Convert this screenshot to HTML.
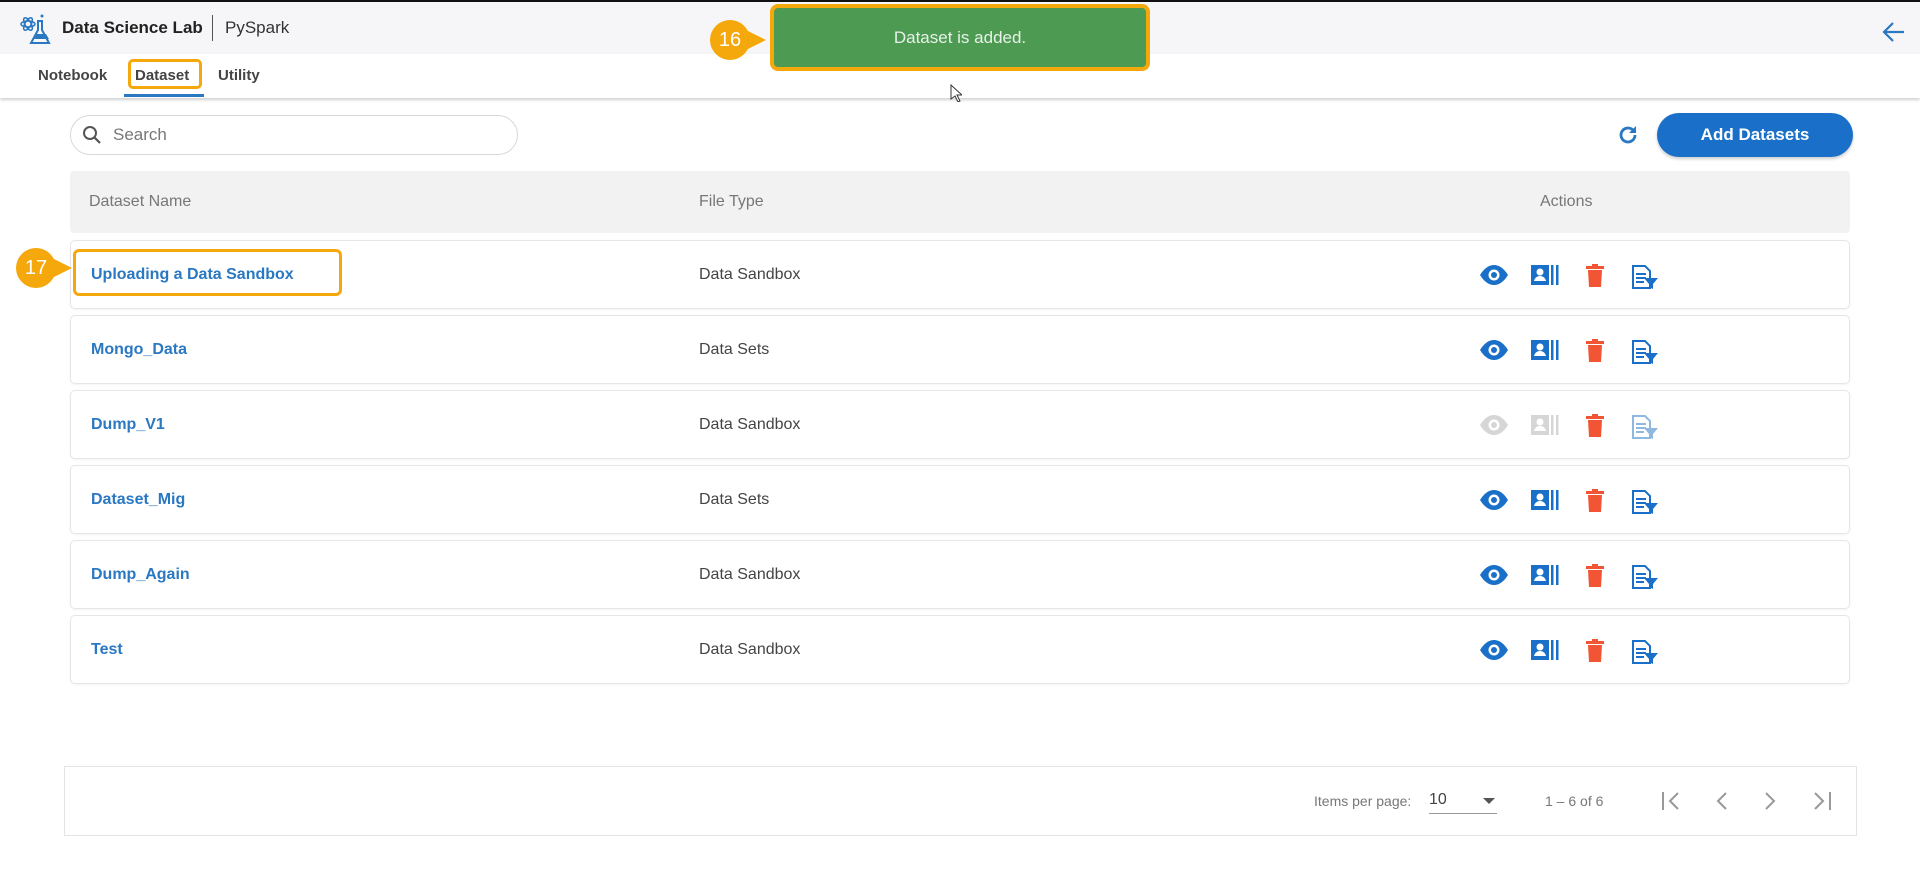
<!DOCTYPE html>
<html><head><meta charset="utf-8"><style>
*{box-sizing:border-box;margin:0;padding:0}
body{width:1920px;height:873px;background:#fff;font-family:"Liberation Sans",sans-serif;position:relative;overflow:hidden;color:#333}
.abs{position:absolute}
.top{left:0;top:0;width:1920px;height:54px;background:#f6f6f8;border-top:2px solid #111}
.tabs{left:0;top:54px;width:1920px;height:44px;background:#fff;box-shadow:0 2px 3px rgba(0,0,0,.18)}
.tab{position:absolute;top:67px;font-size:15px;color:#444;font-weight:bold}
.th{color:#777;font-size:16px}
.row{position:absolute;left:70px;width:1780px;height:69px;border:1px solid #e6e6e6;border-radius:5px;background:#fff;box-shadow:0 1px 2px rgba(0,0,0,.05)}
.row .n{position:absolute;left:20px;top:25px;font-size:16px;font-weight:bold;color:#2a78c2}
.row .t{position:absolute;left:628px;top:25px;font-size:16px;color:#444}
.row svg{position:absolute;top:23px}
.badge{background:#f5a80c;color:#fff;font-size:20px;width:40px;height:40px;border-radius:50%;text-align:center;line-height:40px}
</style></head><body>
<div class="abs top"></div>
<svg class="abs" style="left:20px;top:13px" width="32" height="34" viewBox="0 0 32 34"><ellipse cx="8" cy="11" rx="7" ry="3" fill="none" stroke="#2a78c2" stroke-width="1.5"/><ellipse cx="8" cy="11" rx="7" ry="3" transform="rotate(60 8 11)" fill="none" stroke="#2a78c2" stroke-width="1.5"/><ellipse cx="8" cy="11" rx="7" ry="3" transform="rotate(-60 8 11)" fill="none" stroke="#2a78c2" stroke-width="1.5"/><path d="M17 8h6M18 8v9l-7 13h18l-7-13V8" fill="none" stroke="#2a78c2" stroke-width="2"/><path d="M13 26l3-5h10l3 5z" fill="#2a78c2"/><circle cx="22" cy="3" r="1.5" fill="#2a78c2"/></svg>
<div class="abs" style="left:62px;top:18px;font-size:17px;font-weight:bold;color:#222">Data Science Lab</div>
<div class="abs" style="left:212px;top:15px;width:1px;height:26px;background:#555"></div>
<div class="abs" style="left:225px;top:18px;font-size:17px;color:#333">PySpark</div>
<svg class="abs" style="left:1882px;top:21px" width="24" height="22" viewBox="0 0 24 22"><path d="M22 11H3M11 2L2 11l9 9" fill="none" stroke="#2a78c2" stroke-width="2.2"/></svg>
<div class="abs tabs"></div>
<div class="tab" style="left:38px">Notebook</div>
<div class="tab" style="left:135px">Dataset</div>
<div class="tab" style="left:218px">Utility</div>
<div class="abs" style="left:128px;top:59px;width:74px;height:30px;border:3px solid #f5a80c;border-radius:5px"></div>
<div class="abs" style="left:124px;top:94px;width:80px;height:3px;background:#2a78c2"></div>
<div class="abs" style="left:770px;top:4px;width:380px;height:67px;background:#4d9a52;border:4px solid #f5a80c;border-radius:8px;color:#e8f2e8;font-size:17px;text-align:center;line-height:59px">Dataset is added.</div>
<div class="abs badge" style="left:710px;top:20px">16</div>
<div class="abs" style="left:746px;top:30px;width:0;height:0;border-top:10px solid transparent;border-bottom:10px solid transparent;border-left:20px solid #f5a80c"></div>
<svg class="abs" style="left:950px;top:84px" width="12" height="18" viewBox="0 0 12 18"><path d="M1 1v14l4-3 3 6 2-1-3-6h5z" fill="#fff" stroke="#333"/></svg>
<div class="abs" style="left:70px;top:115px;width:448px;height:40px;border:1px solid #d8d8d8;border-radius:20px"></div>
<svg class="abs" style="left:82px;top:125px" width="20" height="20" viewBox="0 0 20 20"><circle cx="8" cy="8" r="6" fill="none" stroke="#555" stroke-width="2"/><path d="M12.5 12.5L18 18" stroke="#555" stroke-width="2.2"/></svg>
<div class="abs" style="left:113px;top:125px;font-size:17px;color:#777">Search</div>
<svg class="abs" style="left:1616px;top:123px" width="24" height="24" viewBox="0 0 24 24"><path d="M19 12a7 7 0 1 1-2.1-5" fill="none" stroke="#2a78c2" stroke-width="2.8"/><path d="M20 3v7h-7z" fill="#2a78c2"/></svg>
<div class="abs" style="left:1657px;top:113px;width:196px;height:44px;background:#1a70c8;border-radius:22px;color:#fff;font-weight:bold;font-size:17px;text-align:center;line-height:44px;box-shadow:0 2px 3px rgba(0,0,0,.2)">Add Datasets</div>
<div class="abs" style="left:70px;top:171px;width:1780px;height:62px;background:#f2f2f2;border-radius:4px"></div>
<div class="abs th" style="left:89px;top:193px">Dataset Name</div>
<div class="abs th" style="left:699px;top:193px">File Type</div>
<div class="abs th" style="left:1540px;top:193px">Actions</div>

<div id="rows"></div>
<script>
var d=[["Uploading a Data Sandbox","Data Sandbox",0],["Mongo_Data","Data Sets",0],["Dump_V1","Data Sandbox",1],["Dataset_Mig","Data Sets",0],["Dump_Again","Data Sandbox",0],["Test","Data Sandbox",0]];
var h="";
d.forEach(function(r,i){var y=240+i*75;var b=r[2]?"#d6d6d6":"#1a70c8";var f=r[2]?"#8fb8e0":"#1a70c8";
h+='<div class="row" style="top:'+y+'px"><div class="n">'+r[0]+'</div><div class="t">'+r[1]+'</div>'+
'<svg style="left:1408px" width="30" height="22" viewBox="0 0 30 22"><path d="M1 11C6 3 11 1 15 1s9 2 14 10c-5 8-10 10-14 10S6 19 1 11z" fill="'+b+'"/><circle cx="15" cy="11" r="5.5" fill="#fff"/><circle cx="15" cy="11" r="3" fill="'+b+'"/></svg>'+
'<svg style="left:1459px" width="30" height="22" viewBox="0 0 30 22"><rect x="1" y="1" width="18" height="20" fill="'+b+'"/><circle cx="10" cy="8" r="3.5" fill="#fff"/><path d="M4 17c1-4 4-5 6-5s5 1 6 5z" fill="#fff"/><rect x="21" y="1" width="2.5" height="20" fill="'+b+'"/><rect x="26" y="1" width="2.5" height="20" fill="'+b+'"/></svg>'+
'<svg style="left:1514px" width="20" height="24" viewBox="0 0 20 24"><rect x="1" y="2" width="18" height="3" fill="#f25533"/><rect x="7" y="0" width="6" height="3" fill="#f25533"/><path d="M3 6h14l-1 17H4z" fill="#f25533"/></svg>'+
'<svg style="left:1560px" width="28" height="26" viewBox="0 0 28 26"><path d="M2 2h12l5 5v17H2z" fill="#fff" stroke="'+f+'" stroke-width="2"/><path d="M5 10h10M5 14h10M5 18h8" stroke="'+f+'" stroke-width="2"/><path d="M13 14h14l-5 6v5l-4-2v-3z" fill="'+f+'"/></svg></div>';});
document.getElementById("rows").innerHTML=h;
</script>
<div class="abs" style="left:73px;top:249px;width:269px;height:47px;border:3px solid #f5a80c;border-radius:6px"></div>
<div class="abs badge" style="left:16px;top:248px">17</div>
<div class="abs" style="left:52px;top:258px;width:0;height:0;border-top:10px solid transparent;border-bottom:10px solid transparent;border-left:20px solid #f5a80c"></div>

<div class="abs" style="left:64px;top:766px;width:1793px;height:70px;border:1px solid #e4e4e4"></div>
<div class="abs" style="left:1314px;top:793px;font-size:14px;color:#777">Items per page:</div>
<div class="abs" style="left:1429px;top:791px;font-size:16px;color:#444">10</div>
<div class="abs" style="left:1429px;top:813px;width:68px;height:1px;background:#999"></div>
<div class="abs" style="left:1483px;top:798px;border-left:6px solid transparent;border-right:6px solid transparent;border-top:6px solid #555"></div>
<div class="abs" style="left:1545px;top:793px;font-size:14px;color:#777">1 – 6 of 6</div>
<svg class="abs" style="left:1660px;top:789px" width="180" height="24" viewBox="0 0 180 24" fill="none" stroke="#999" stroke-width="2"><path d="M3 3v18M18 4l-8 8 8 8"/><path d="M66 4l-8 8 8 8"/><path d="M106 4l8 8-8 8"/><path d="M155 4l8 8-8 8M170 3v18"/></svg>
</body></html>
